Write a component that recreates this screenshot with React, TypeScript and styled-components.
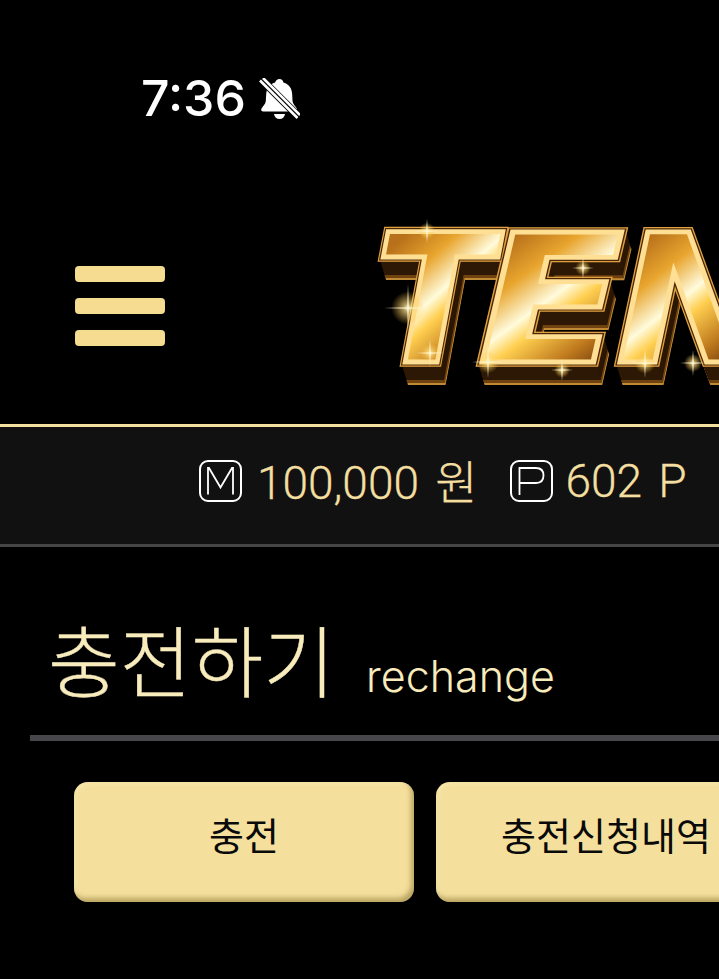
import React from 'react';
import styled, { createGlobalStyle } from 'styled-components';

const GOLD = '#f3dfa0';
const KR = '"Noto Sans CJK KR", "Noto Sans", sans-serif';

const Global = createGlobalStyle`
  html, body {
    margin: 0;
    padding: 0;
    background: #000;
    overflow: hidden;
  }
`;

const Page = styled.div`
  width: 719px;
  height: 979px;
  overflow: hidden;
  background: #000;
`;

const StatusBar = styled.div`
  height: 197px;
  box-sizing: border-box;
  padding: 68px 0 0 141px;
  display: flex;
  align-items: flex-start;
  gap: 13px;
`;

const Clock = styled.span`
  font-family: Inter, "Liberation Sans", sans-serif;
  font-weight: 500;
  font-size: 50px;
  line-height: 60px;
  color: #fff;
`;

const BellWrap = styled.div`
  margin-top: 10px;
  line-height: 0;
`;

const Header = styled.header`
  height: 227px;
  display: flex;
  align-items: flex-start;
  overflow: hidden;
`;

const Menu = styled.div`
  margin: 69px 0 0 75px;
  width: 90px;
  flex-shrink: 0;
  display: flex;
  flex-direction: column;
  gap: 16px;
`;

const MenuBar = styled.span`
  display: block;
  height: 16px;
  border-radius: 4px;
  background: #f5dc90;
`;

const LogoBox = styled.div`
  margin: 22px 0 0 203px;
  flex-shrink: 0;
  line-height: 0;
`;

const LogoText = styled.text`
  font-family: "DejaVu Sans", sans-serif;
  font-weight: 700;
  font-style: italic;
  font-size: 186px;
  stroke-linejoin: miter;
`;

const BalanceBar = styled.div`
  height: 107px;
  border-top: 3px solid ${GOLD};
  border-bottom: 3px solid #454545;
  background: #111112;
  display: flex;
  align-items: center;
  padding: 0 0 10px 199px;
  gap: 33px;
  overflow: hidden;
  white-space: nowrap;
`;

const Balance = styled.div<{ $gap: number }>`
  display: flex;
  align-items: center;
  flex-shrink: 0;
  gap: ${p => p.$gap}px;
`;

const BalanceText = styled.span`
  font-family: Roboto, ${KR};
  font-weight: 300;
  font-size: 46px;
  line-height: 60px;
  word-spacing: 5px;
  color: ${GOLD};
  -webkit-text-stroke: 0.3px ${GOLD};
`;

const Unit = styled.span`
  font-family: ${KR};
  font-size: 46px;
  font-weight: 300;
`;

const Badge = styled.div`
  width: 43px;
  height: 42px;
  box-sizing: border-box;
  border: 2px solid #fff;
  border-radius: 9px;
  flex-shrink: 0;
  line-height: 0;
`;

const TitleRow = styled.div`
  height: 194px;
  box-sizing: border-box;
  margin-left: 30px;
  border-bottom: 6px solid #47474b;
  padding: 63px 0 0 18px;
  display: flex;
  align-items: baseline;
  gap: 31px;
`;

const Title = styled.h1`
  margin: 0;
  font-family: ${KR};
  font-weight: 300;
  font-size: 78px;
  line-height: 96px;
  color: #f8ecbd;
  -webkit-text-stroke: 0.4px #f8ecbd;
`;

const SubTitle = styled.span`
  font-family: Inter, ${KR};
  font-weight: 300;
  font-size: 43px;
  color: #f8ecbd;
`;

const Tabs = styled.nav`
  display: flex;
  gap: 22px;
  padding: 41px 0 0 74px;
`;

const Tab = styled.button`
  width: 340px;
  height: 120px;
  flex-shrink: 0;
  border: 0;
  padding: 0 0 17px;
  border-radius: 14px;
  background: #f4e09c;
  box-shadow: inset -3px -4px 5px rgba(130, 105, 40, 0.5), inset 2px 2px 4px rgba(255, 245, 200, 0.4);
  font-family: ${KR};
  font-size: 38px;
  color: #0a0a0a;
`;

const BellOffIcon = () => (
  <svg width="41" height="42" viewBox="0 0 41 42">
    <path
      d="M20.5 1c2.200 0 3.600 1.500 3.900 3.500 5.800 1.500 8.600 6.300 8.800 12l.3 6.500c.2 3 3 5 4.300 7.500.8 1.800-.2 3-2 3H4.500c-1.900 0-2.900-1.400-2-3.100 1.300-2.300 4.100-4.300 4.300-7.400l.4-6.500c.2-5.700 3-10.500 8.900-12C16.900 2.500 18.300 1 20.500 1z"
      fill="#fff"
    />
    <path d="M15 36h11c-.4 3-2.700 5-5.500 5S15.400 39 15 36z" fill="#fff" />
    <path d="M2 1 40 39" stroke="#000" strokeWidth="8" />
    <path d="M1 2.500 38.500 40M4 0 41 37" stroke="#fff" strokeWidth="2.600" fill="none" />
  </svg>
);

const MoneyIcon = () => (
  <svg width="39" height="38" viewBox="0 0 39 38">
    <path d="M7 32.500V6h1L19.500 25.500 31 6h1v26.500" fill="none" stroke="#fff" strokeWidth="1.800" />
  </svg>
);

const PointIcon = () => (
  <svg width="39" height="38" viewBox="0 0 39 38">
    <path d="M7.500 33V6h16.500c5 0 7.500 3 7.500 7.500s-2.500 7.500-7.500 7.500h-16.500" fill="none" stroke="#fff" strokeWidth="1.800" />
  </svg>
);

// centre x, centre y, ray length, relative to the logo box
const SPARKS: [number, number, number][] = [
  [40, 89, 24], [120, 143, 16], [194, 151, 11], [215, 49, 11],
  [59, 12, 12], [62, 134, 14], [277, 144, 15], [325, 144, 13],
];

const LETTERS: [string, number, number][] = [
  ['T', 7, 0.92],
  ['E', 110, 1.15],
  ['N', 248, 1.05],
];

const Logo = () => {
  const depth = Array.from({ length: 20 }, (_, i) => 20 - i);
  return (
    <svg width="351" height="170" viewBox="0 0 351 170">
      <defs>
        <linearGradient id="face" gradientUnits="userSpaceOnUse" x1="30" y1="-130" x2="125" y2="-20">
          <stop offset="0" stopColor="#b8701a" />
          <stop offset="0.25" stopColor="#e8a52e" />
          <stop offset="0.48" stopColor="#fffbdc" />
          <stop offset="0.6" stopColor="#ffcf50" />
          <stop offset="0.85" stopColor="#bf7a1e" />
          <stop offset="1" stopColor="#84480e" />
        </linearGradient>
        <radialGradient id="glow">
          <stop offset="0" stopColor="#fffbe8" />
          <stop offset="0.25" stopColor="#ffe38a" stopOpacity="0.7" />
          <stop offset="1" stopColor="#ffc040" stopOpacity="0" />
        </radialGradient>
        <g id="word">
          {LETTERS.map(([ch, x, sx]) => (
            <LogoText key={ch} transform={`translate(${x} 143) scale(${sx} 0.96)`}>{ch}</LogoText>
          ))}
        </g>
      </defs>
      {depth.map(d => (
        <use
          key={d}
          href="#word"
          x={d * 0.3}
          y={d}
          fill={d > 18 ? '#c08a34' : d > 15 ? '#6f4210' : d > 8 ? '#3a2006' : '#6a3d0d'}
          stroke={d > 18 ? '#c08a34' : d > 15 ? '#6f4210' : '#2c1804'}
          strokeWidth="6"
        />
      ))}
      <use href="#word" fill="none" stroke="#e0a040" strokeWidth="10" />
      <use href="#word" fill="none" stroke="#4a2606" strokeWidth="7.500" />
      <use href="#word" fill="url(#face)" stroke="#ffdf94" strokeWidth="5" />
      {SPARKS.map(([cx, cy, r]) => (
        <g key={`${cx}-${cy}`}>
          <circle cx={cx} cy={cy} r={r * 0.7} fill="url(#glow)" />
          <path
            d={`M${cx - r} ${cy}L${cx} ${cy - 0.8}L${cx + r} ${cy}L${cx} ${cy + 0.8}ZM${cx} ${cy - r}L${cx + 0.8} ${cy}L${cx} ${cy + r}L${cx - 0.8} ${cy}Z`}
            fill="#fff6d0"
          />
        </g>
      ))}
    </svg>
  );
};

export default function App() {
  return (
    <Page>
      <Global />
      <StatusBar>
        <Clock>7:36</Clock>
        <BellWrap>
          <BellOffIcon />
        </BellWrap>
      </StatusBar>
      <Header>
        <Menu>
          <MenuBar />
          <MenuBar />
          <MenuBar />
        </Menu>
        <LogoBox>
          <Logo />
        </LogoBox>
      </Header>
      <BalanceBar>
        <Balance $gap={15}>
          <Badge><MoneyIcon /></Badge>
          <BalanceText>100,000 <Unit>원</Unit></BalanceText>
        </Balance>
        <Balance $gap={12}>
          <Badge><PointIcon /></Badge>
          <BalanceText>602 P</BalanceText>
        </Balance>
        <Balance $gap={0}>
          <Badge />
        </Balance>
      </BalanceBar>
      <TitleRow>
        <Title>충전하기</Title>
        <SubTitle>rechange</SubTitle>
      </TitleRow>
      <Tabs>
        <Tab>충전</Tab>
        <Tab>충전신청내역</Tab>
      </Tabs>
    </Page>
  );
}
